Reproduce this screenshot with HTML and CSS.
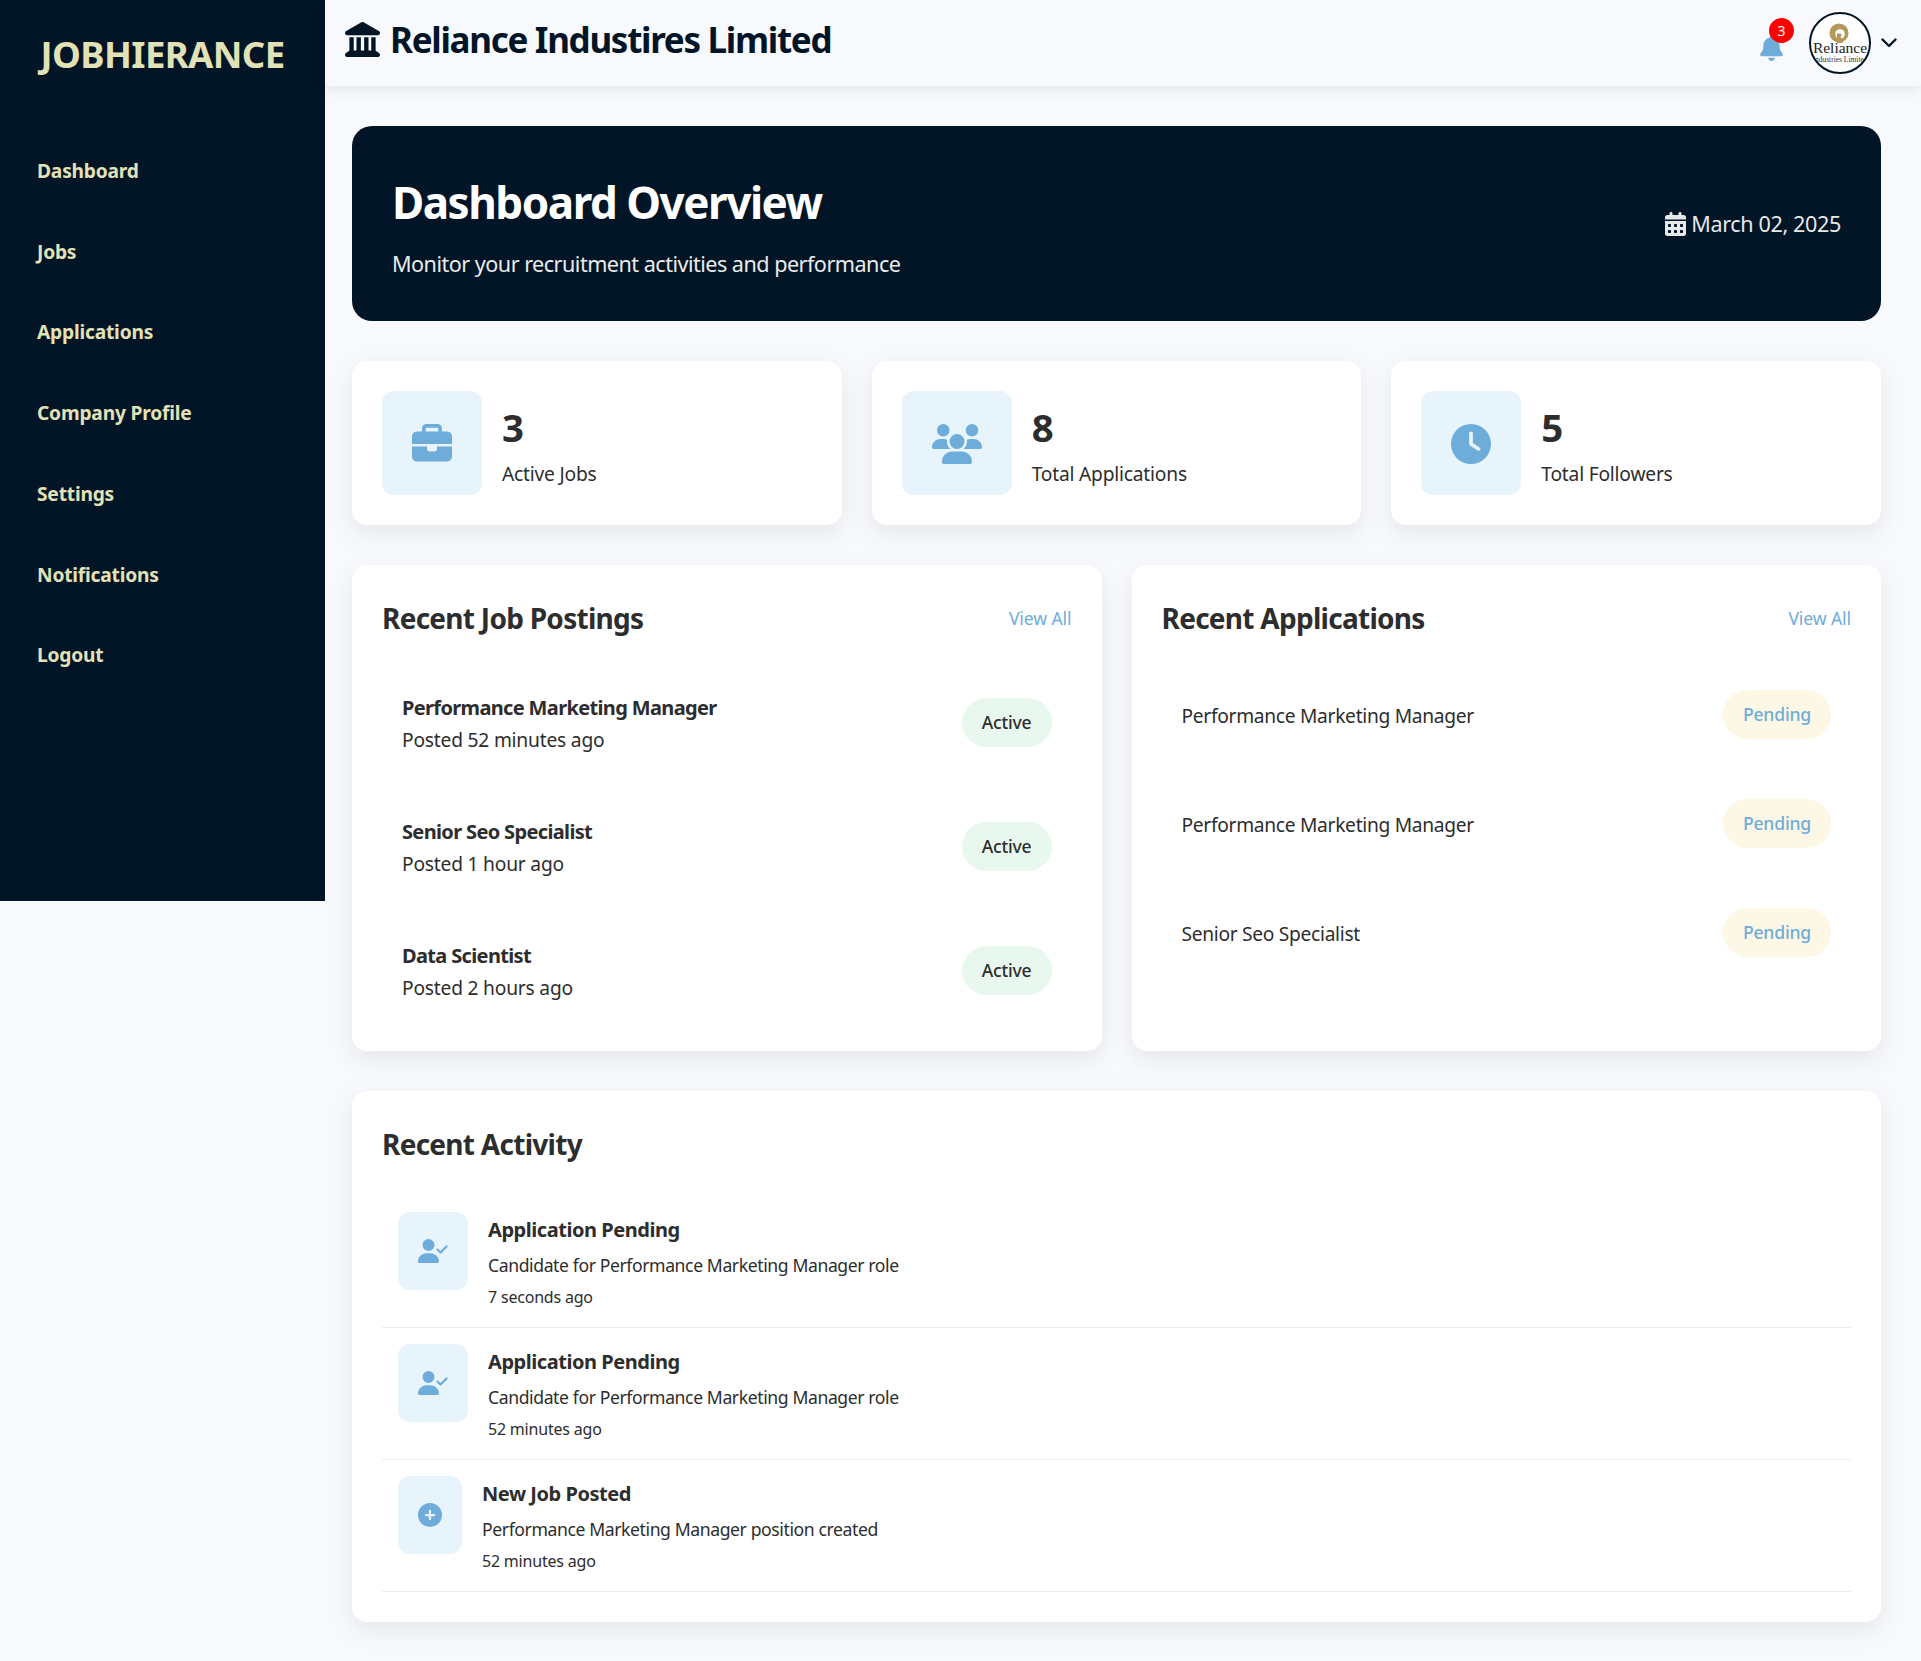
FILE: index.html
```html
<!DOCTYPE html>
<html lang="en">

<head>
    <meta charset="UTF-8">
    <title>Jobhierance - Dashboard</title>
    <link rel="stylesheet" href="styles.css">
</head>

<body>
    <div class="layout">
        <aside class="sidebar">
            <div class="logo">JOBHIERANCE</div>
            <nav class="nav">
                <a class="nav-link" href="#">Dashboard</a>
                <a class="nav-link" href="#">Jobs</a>
                <a class="nav-link" href="#">Applications</a>
                <a class="nav-link" href="#">Company Profile</a>
                <a class="nav-link" href="#">Settings</a>
                <a class="nav-link" href="#">Notifications</a>
                <a class="nav-link" href="#">Logout</a>
            </nav>
        </aside>

        <div class="main">
            <header class="topbar">
                <div class="company">
                    <svg class="company-icon" viewBox="0 0 512 512"><path d="M240.100 4.200c9.800-5.600 21.900-5.600 31.800 0l171.800 98.100L448 104l0 .9 47.900 27.400c12.600 7.200 18.800 22 15.100 36s-16.400 23.800-30.900 23.800H32c-14.500 0-27.200-9.800-30.900-23.800s2.500-28.800 15.100-36L64 104.900V104l4.400-1.600L240.100 4.200zM64 224h64V416h40V224h64V416h48V224h64V416h40V224h64V420.300c.6 .3 1.200 .7 1.800 1.100l48 32c11.700 7.800 17 22.400 12.900 35.900S494.100 512 480 512H32c-14.100 0-26.500-9.200-30.600-22.700s1.100-28.100 12.900-35.900l48-32c.6-.4 1.200-.8 1.800-1.100V224z"/></svg>
                    <span class="company-name">Reliance Industires Limited</span>
                </div>
                <div class="topbar-right">
                    <div class="bell">
                        <svg class="bell-icon" viewBox="0 0 448 512"><path d="M224 0c-17.700 0-32 14.300-32 32V51.200C119 66 64 130.600 64 208v18.800c0 47-17.300 92.400-48.500 127.600l-7.400 8.300c-8.400 9.400-10.400 22.900-5.300 34.400S19.400 416 32 416H416c12.600 0 24-7.400 29.200-18.900s3.100-25-5.300-34.400l-7.400-8.300C401.300 319.200 384 273.900 384 226.800V208c0-77.400-55-142-128-156.800V32c0-17.700-14.300-32-32-32zm45.300 493.300c12-12 18.700-28.300 18.700-45.300H224 160c0 17 6.700 33.300 18.700 45.300s28.300 18.700 45.300 18.700s33.300-6.700 45.300-18.700z"/></svg>
                        <span class="bell-count">3</span>
                    </div>
                    <div class="avatar">
                        <svg viewBox="0 0 58 58" width="58" height="58">
                            <circle cx="28" cy="19" r="9.500" fill="#b6985a"/>
                            <circle cx="29" cy="20" r="4.800" fill="#fff"/>
                            <path d="M26 29v-9.500h3.600l1.400 1.500-1.400 1.600 2.400 6.400z" fill="#b6985a"/>
                            <text x="29" y="39" class="avatar-name" text-anchor="middle">Reliance</text>
                            <text x="29" y="48" class="avatar-sub" text-anchor="middle">Industries Limited</text>
                        </svg>
                    </div>
                    <svg class="chevron" viewBox="0 0 16 10"><path d="M1.500 1.500L8 8l6.500-6.500" fill="none" stroke="#021526" stroke-width="2.400" stroke-linecap="round" stroke-linejoin="round"/></svg>
                </div>
            </header>

            <main class="content">
                <section class="banner">
                    <div>
                        <h1 class="banner-title">Dashboard Overview</h1>
                        <p class="banner-sub">Monitor your recruitment activities and performance</p>
                    </div>
                    <div class="banner-date">
                        <svg class="date-icon" viewBox="0 0 448 512"><path d="M128 0c17.700 0 32 14.300 32 32V64H288V32c0-17.700 14.300-32 32-32s32 14.300 32 32V64h48c26.500 0 48 21.500 48 48v48H0V112C0 85.500 21.500 64 48 64H96V32c0-17.700 14.300-32 32-32zM0 192H448V464c0 26.500-21.500 48-48 48H48c-26.500 0-48-21.500-48-48V192zm64 80v32c0 8.800 7.200 16 16 16h32c8.800 0 16-7.200 16-16V272c0-8.800-7.200-16-16-16H80c-8.800 0-16 7.200-16 16zm128 0v32c0 8.800 7.200 16 16 16h32c8.800 0 16-7.200 16-16V272c0-8.800-7.200-16-16-16H208c-8.800 0-16 7.200-16 16zm144-16c-8.800 0-16 7.200-16 16v32c0 8.800 7.200 16 16 16h32c8.800 0 16-7.200 16-16V272c0-8.800-7.200-16-16-16H336zM64 400v32c0 8.800 7.200 16 16 16h32c8.800 0 16-7.200 16-16V400c0-8.800-7.200-16-16-16H80c-8.800 0-16 7.200-16 16zm144-16c-8.800 0-16 7.200-16 16v32c0 8.800 7.200 16 16 16h32c8.800 0 16-7.200 16-16V400c0-8.800-7.200-16-16-16H208zm112 16v32c0 8.800 7.200 16 16 16h32c8.800 0 16-7.200 16-16V400c0-8.800-7.200-16-16-16H336c-8.800 0-16 7.200-16 16z"/></svg>
                        <span>March 02, 2025</span>
                    </div>
                </section>

                <section class="stats">
                    <div class="card stat">
                        <div class="stat-icon">
                            <svg class="icon-40" viewBox="0 0 512 512"><path d="M184 48H328c4.400 0 8 3.600 8 8V96H176V56c0-4.400 3.600-8 8-8zm-56 8V96H64C28.700 96 0 124.700 0 160v96H192 320 512V160c0-35.300-28.700-64-64-64H384V56c0-30.900-25.100-56-56-56H184c-30.900 0-56 25.100-56 56zM512 288H320v32c0 17.700-14.300 32-32 32H224c-17.700 0-32-14.300-32-32V288H0V416c0 35.300 28.700 64 64 64H448c35.300 0 64-28.700 64-64V288z"/></svg>
                        </div>
                        <div>
                            <div class="stat-value">3</div>
                            <div class="stat-label">Active Jobs</div>
                        </div>
                    </div>
                    <div class="card stat">
                        <div class="stat-icon">
                            <svg class="icon-50" viewBox="0 0 640 512"><path d="M144 0a80 80 0 1 1 0 160A80 80 0 1 1 144 0zM512 0a80 80 0 1 1 0 160A80 80 0 1 1 512 0zM0 298.700C0 239.800 47.800 192 106.700 192h42.700c15.900 0 31 3.500 44.600 9.700c-1.300 7.200-1.900 14.700-1.900 22.300c0 38.200 16.800 72.500 43.300 96c-.2 0-.4 0-.7 0H21.300C9.600 320 0 310.400 0 298.700zM405.300 320c-.2 0-.4 0-.7 0c26.600-23.500 43.300-57.800 43.300-96c0-7.600-.7-15-1.900-22.300c13.600-6.300 28.700-9.700 44.600-9.700h42.700C592.200 192 640 239.800 640 298.700c0 11.800-9.600 21.300-21.300 21.300H405.300zM224 224a96 96 0 1 1 192 0 96 96 0 1 1 -192 0zM128 485.300C128 411.700 187.700 352 261.300 352H378.700C452.300 352 512 411.700 512 485.300c0 14.700-11.900 26.700-26.700 26.700H154.700c-14.700 0-26.700-11.900-26.700-26.700z"/></svg>
                        </div>
                        <div>
                            <div class="stat-value">8</div>
                            <div class="stat-label">Total Applications</div>
                        </div>
                    </div>
                    <div class="card stat">
                        <div class="stat-icon">
                            <svg class="icon-40" viewBox="0 0 512 512"><path d="M256 0a256 256 0 1 1 0 512A256 256 0 1 1 256 0zM232 120V256c0 8 4 15.500 10.700 20l96 64c11 7.400 25.900 4.400 33.300-6.700s4.400-25.900-6.700-33.300L280 243.200V120c0-13.300-10.700-24-24-24s-24 10.700-24 24z"/></svg>
                        </div>
                        <div>
                            <div class="stat-value">5</div>
                            <div class="stat-label">Total Followers</div>
                        </div>
                    </div>
                </section>

                <section class="recent">
                    <div class="card panel">
                        <div class="panel-head">
                            <h2 class="panel-title">Recent Job Postings</h2>
                            <a class="view-all" href="#">View All</a>
                        </div>
                        <div class="rows">
                            <div class="row">
                                <div class="row-text">
                                    <div class="job-title">Performance Marketing Manager</div>
                                    <div class="job-time">Posted 52 minutes ago</div>
                                </div>
                                <span class="badge badge-active">Active</span>
                            </div>
                            <div class="row">
                                <div class="row-text">
                                    <div class="job-title">Senior Seo Specialist</div>
                                    <div class="job-time">Posted 1 hour ago</div>
                                </div>
                                <span class="badge badge-active">Active</span>
                            </div>
                            <div class="row">
                                <div class="row-text">
                                    <div class="job-title">Data Scientist</div>
                                    <div class="job-time">Posted 2 hours ago</div>
                                </div>
                                <span class="badge badge-active">Active</span>
                            </div>
                        </div>
                    </div>

                    <div class="card panel">
                        <div class="panel-head">
                            <h2 class="panel-title">Recent Applications</h2>
                            <a class="view-all" href="#">View All</a>
                        </div>
                        <div class="rows">
                            <div class="row">
                                <div class="row-text app-title">Performance Marketing Manager</div>
                                <span class="badge badge-pending">Pending</span>
                            </div>
                            <div class="row">
                                <div class="row-text app-title">Performance Marketing Manager</div>
                                <span class="badge badge-pending">Pending</span>
                            </div>
                            <div class="row">
                                <div class="row-text app-title">Senior Seo Specialist</div>
                                <span class="badge badge-pending">Pending</span>
                            </div>
                        </div>
                    </div>
                </section>

                <section class="card panel">
                    <div class="panel-head">
                        <h2 class="panel-title">Recent Activity</h2>
                    </div>
                    <div class="activity">
                        <div class="activity-item">
                            <div class="activity-icon">
                                <svg class="icon-30" viewBox="0 0 640 512"><path d="M96 128a128 128 0 1 1 256 0A128 128 0 1 1 96 128zM0 482.300C0 383.800 79.800 304 178.300 304h91.400C368.200 304 448 383.800 448 482.300c0 16.400-13.300 29.700-29.700 29.700H29.700C13.300 512 0 498.700 0 482.300zM625 177L497 305c-9.400 9.400-24.600 9.400-33.900 0L399 241c-9.400-9.400-9.400-24.600 0-33.900s24.600-9.400 33.900 0l47 47L591 143c9.400-9.400 24.600-9.400 33.900 0s9.400 24.600 0 33.900z"/></svg>
                            </div>
                            <div>
                                <div class="activity-title">Application Pending</div>
                                <div class="activity-desc">Candidate for Performance Marketing Manager role</div>
                                <div class="activity-time">7 seconds ago</div>
                            </div>
                        </div>
                        <div class="activity-item">
                            <div class="activity-icon">
                                <svg class="icon-30" viewBox="0 0 640 512"><path d="M96 128a128 128 0 1 1 256 0A128 128 0 1 1 96 128zM0 482.300C0 383.800 79.800 304 178.300 304h91.400C368.200 304 448 383.800 448 482.300c0 16.400-13.300 29.700-29.700 29.700H29.700C13.300 512 0 498.700 0 482.300zM625 177L497 305c-9.400 9.400-24.600 9.400-33.900 0L399 241c-9.400-9.400-9.400-24.600 0-33.900s24.600-9.400 33.900 0l47 47L591 143c9.400-9.400 24.600-9.400 33.900 0s9.400 24.600 0 33.900z"/></svg>
                            </div>
                            <div>
                                <div class="activity-title">Application Pending</div>
                                <div class="activity-desc">Candidate for Performance Marketing Manager role</div>
                                <div class="activity-time">52 minutes ago</div>
                            </div>
                        </div>
                        <div class="activity-item">
                            <div class="activity-icon">
                                <svg class="icon-24" viewBox="0 0 512 512"><path d="M256 512A256 256 0 1 0 256 0a256 256 0 1 0 0 512zM232 344V280H168c-13.300 0-24-10.700-24-24s10.700-24 24-24h64V168c0-13.300 10.700-24 24-24s24 10.700 24 24v64h64c13.300 0 24 10.700 24 24s-10.700 24-24 24H280v64c0 13.300-10.700 24-24 24s-24-10.700-24-24z"/></svg>
                            </div>
                            <div>
                                <div class="activity-title">New Job Posted</div>
                                <div class="activity-desc">Performance Marketing Manager position created</div>
                                <div class="activity-time">52 minutes ago</div>
                            </div>
                        </div>
                    </div>
                </section>
            </main>
        </div>
    </div>
</body>

</html>
```

FILE: styles.css
```css
* {
    box-sizing: border-box;
}

body {
    margin: 0;
    background-color: #f8f9fd;
    color: #2d2d2d;
    font-family: "Noto Sans", "Open Sans", sans-serif;
    line-height: 1.6;
}

h1,
h2,
p {
    margin: 0;
}

a {
    text-decoration: none;
}

.layout {
    display: flex;
    align-items: flex-start;
}

/* sidebar */
.sidebar {
    width: 325px;
    height: 901px;
    flex-shrink: 0;
    background-color: #021526;
}

.logo {
    height: 131px;
    padding-top: 26px;
    text-align: center;
    color: #e2e2b6;
    font-size: 36.5px;
    font-weight: 700;
    line-height: 56px;
    letter-spacing: -0.6px;
}

.nav-link {
    display: block;
    padding: 25px 37px;
    color: #e2e2b6;
    font-size: 19.2px;
    font-weight: 700;
    letter-spacing: -0.2px;
}

/* top bar */
.main {
    flex: 1;
    min-width: 0;
}

.topbar {
    display: flex;
    justify-content: space-between;
    align-items: center;
    height: 86px;
    padding: 0 24px 0 20px;
    background-color: #f8f9fd;
    box-shadow: 0 4px 12px rgba(0, 0, 0, 0.08);
}

.company {
    display: flex;
    align-items: center;
    gap: 10px;
    margin-top: -7px;
}

.company-icon {
    width: 35px;
    height: 35px;
    fill: #021526;
}

.company-name {
    color: #021526;
    font-size: 35px;
    font-weight: 700;
    letter-spacing: -1.3px;
}

.topbar-right {
    display: flex;
    align-items: center;
}

.bell {
    position: relative;
    width: 25px;
    height: 26px;
    margin: 10px 25px 0 0;
}

.bell-icon {
    display: block;
    width: 25px;
    height: 26px;
    fill: #6eacda;
}

.bell-count {
    position: absolute;
    top: -17px;
    left: 10px;
    width: 25px;
    height: 25px;
    border-radius: 50%;
    background-color: #ff0000;
    color: #fff;
    font-size: 14px;
    line-height: 25px;
    text-align: center;
}

.avatar {
    width: 62px;
    height: 62px;
    border: 2px solid #021526;
    border-radius: 50%;
    background-color: #fff;
    overflow: hidden;
}

.avatar svg {
    display: block;
}

.avatar-name {
    font-family: "Liberation Serif", serif;
    font-size: 15.5px;
    fill: #222;
}

.avatar-sub {
    font-family: "Liberation Serif", serif;
    font-size: 7.5px;
    fill: #333;
}

.chevron {
    width: 16px;
    height: 10px;
    margin-left: 10px;
}

/* content */
.content {
    display: flex;
    flex-direction: column;
    gap: 40px;
    padding: 40px 40px 40px 27px;
}

.banner {
    display: flex;
    justify-content: space-between;
    align-items: center;
    height: 195px;
    padding: 0 40px;
    border-radius: 20px;
    background-color: #021526;
    color: #fff;
}

.banner-title {
    font-size: 44px;
    font-weight: 700;
    line-height: 72px;
    letter-spacing: -1.47px;
}

.banner-sub {
    margin-top: 9px;
    color: #eaebec;
    font-size: 21.6px;
    letter-spacing: -0.52px;
}

.banner-date {
    display: flex;
    align-items: center;
    gap: 5px;
    margin-top: 2px;
    color: #e6e8ea;
    font-size: 21.6px;
    letter-spacing: -0.38px;
}

.date-icon {
    width: 21px;
    height: 24px;
    fill: #e6e8ea;
}

.card {
    border-radius: 15px;
    background-color: #fff;
    box-shadow: 0 8px 24px rgba(0, 0, 0, 0.08);
}

.stats {
    display: grid;
    grid-template-columns: repeat(3, 1fr);
    gap: 30px;
}

.stat {
    display: flex;
    align-items: center;
    gap: 20px;
    padding: 30px;
}

.stat-icon {
    display: flex;
    align-items: center;
    height: 104px;
    padding: 2px 30px 0;
    border-radius: 12px;
    background-color: #e8f4fb;
    fill: #6eacda;
}

.icon-40 {
    width: 40px;
    height: 40px;
}

.icon-50 {
    width: 50px;
    height: 40px;
}

.icon-30 {
    width: 30px;
    height: 24px;
}

.icon-24 {
    width: 24px;
    height: 24px;
}

.stat-value {
    font-size: 38.4px;
    font-weight: 700;
    line-height: 60px;
}

.stat-label {
    margin-top: 2px;
    font-size: 19.2px;
    letter-spacing: -0.2px;
}

.recent {
    display: grid;
    grid-template-columns: 1fr 1fr;
    gap: 30px;
}

.panel {
    padding: 30px;
}

.panel-head {
    display: flex;
    justify-content: space-between;
    align-items: center;
    height: 45px;
    padding-top: 2px;
    margin-bottom: 30px;
}

.panel-title {
    font-size: 28px;
    font-weight: 700;
    letter-spacing: -0.72px;
}

.view-all {
    color: #6eacda;
    font-size: 17.6px;
    letter-spacing: -0.1px;
}

.rows {
    display: flex;
    flex-direction: column;
    gap: 20px;
    margin: 1px 0 -1px;
}

.row {
    display: flex;
    justify-content: space-between;
    align-items: center;
    padding: 20px;
}

.row-text {
    margin: 2px 0 -2px;
}

.job-title {
    font-size: 20px;
    font-weight: 700;
    line-height: 32px;
    letter-spacing: -0.65px;
}

.job-time {
    font-size: 19.2px;
    line-height: 32px;
    letter-spacing: -0.2px;
}

.app-title {
    font-size: 19.2px;
    letter-spacing: -0.3px;
}

.badge {
    padding: 10px 20px;
    border-radius: 25px;
    font-size: 17.6px;
    font-weight: 500;
    line-height: 29px;
    letter-spacing: -0.2px;
}

.badge-active {
    background-color: #e8f8ee;
}

.badge-pending {
    background-color: #fdf8e6;
    color: #6eacda;
}

.activity-item {
    display: flex;
    align-items: flex-start;
    gap: 20px;
    height: 132px;
    padding: 16px;
    border-bottom: 1px solid #eee;
}

.activity-icon {
    display: flex;
    align-items: center;
    height: 78px;
    padding: 0 20px;
    border-radius: 12px;
    background-color: #e8f4fb;
    fill: #6eacda;
}

.activity-title {
    margin-top: 2px;
    font-size: 20px;
    font-weight: 700;
    line-height: 32px;
    letter-spacing: -0.45px;
}

.activity-desc {
    margin-top: 3px;
    font-size: 17.6px;
    line-height: 32px;
    letter-spacing: -0.4px;
}

.activity-time {
    font-size: 16px;
    line-height: 32px;
    letter-spacing: -0.2px;
}
```
